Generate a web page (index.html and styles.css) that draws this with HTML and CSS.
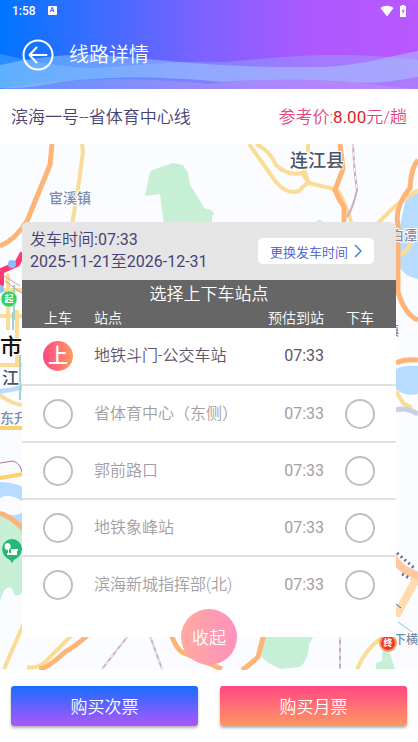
FILE: index.html
```html
<!DOCTYPE html>
<html lang="zh-CN">
<head>
    <meta charset="UTF-8">
    <meta name="viewport" content="width=device-width, initial-scale=1.0">
    <title>线路详情</title>
    <link rel="stylesheet" href="styles.css">
</head>
<body>

<header class="header">
    <svg class="waves" viewBox="0 0 418 89" preserveAspectRatio="none" aria-hidden="true">
        <path d="M0 54 C30 61 60 67 95 68 C130 66 170 61 225 62 C270 58 300 55 335 55 C370 55 395 57 418 60 V89 H0Z" fill="#8ecbff" fill-opacity=".3"/>
        <path d="M0 65 C45 55 80 53 115 56 C180 62 230 68 320 67 C360 66 390 56 418 51 V77 C390 82 370 84 350 82 C300 78 250 80 225 82 C160 76 110 76 60 82 C40 86 20 89 0 88Z" fill="#a8e0ff" fill-opacity=".42"/>
        <path d="M0 89 C80 75 150 78 210 84 C270 77 330 80 370 84 C390 86 405 88 418 89Z" fill="#d9a6ff" fill-opacity=".28"/>
    </svg>
    <div class="status-bar">
        <span>1:58</span>
        <span class="input-badge">A</span>
        <span class="status-icons">
            <svg width="14" height="12" viewBox="0 0 14 12" aria-hidden="true"><path d="M0.5 3 C4 0 10 0 13.500 3 L7 11.500Z" fill="#fff"/></svg>
            <svg width="6" height="12" viewBox="0 0 6 12" aria-hidden="true"><path d="M0 1 H1.500 V0 H4.500 V1 H6 V12 H0Z" fill="#fff"/><path d="M4 2.500 L1.500 6.500 H3 L2.300 10 L4.600 5.500 H3Z" fill="#b058f4"/></svg>
        </span>
    </div>
    <div class="title-bar">
        <button class="back" type="button" aria-label="返回">
            <svg width="32" height="32" viewBox="0 0 32 32" fill="none" stroke="#fff" stroke-width="2" aria-hidden="true">
                <circle cx="16" cy="16" r="14.500"/>
                <path d="M24.500 16 H8 M14.500 8.500 L7.500 16 L14.500 23.500" stroke-linecap="round"/>
            </svg>
        </button>
        <h1>线路详情</h1>
    </div>
</header>

<main class="main">
    <div class="route">
        <h2>滨海一号--省体育中心线</h2>
        <span class="price">参考价:<b>8.00</b>元/趟</span>
    </div>

    <div class="map-section">
        <svg class="map" viewBox="0 144 418 526" preserveAspectRatio="xMidYMid slice" aria-hidden="true">
            <rect y="144" width="418" height="526" fill="#fafcff"/>
            <!-- parks -->
            <g fill="#c6efd5">
                <path d="M145 196 L150 172 Q153 169 158 168 L173 163 L183 165 L188 173 L190 185 L199 199 L204 208 L212 211 V225 H164 L160 194Z"/>
                <path d="M208 209 Q213 209 214 215 L208 216Z M316 222 Q320 218 323 222Z"/>
                <path d="M0 514 Q16 520 23 531 V592 Q17 598 14 594 Q12 585 7 588 Q3 590 0 601Z"/>
                <path d="M264 634 H315 L309 644 Q309 659 300 667 L281 669 Q266 663 261 656Z"/>
                <path d="M383 640 L390 654 L395 669 H376 V663 L382 661Z"/>
            </g>
            <!-- water -->
            <g fill="#b7dcff">
                <path d="M418 193 Q405 196 404 207 L400 226 L397 262 Q402 276 418 279Z"/>
                <path d="M396 369 Q405 365 418 366 V394 Q405 397 396 389Z"/>
                <path d="M0 389 L14 387 L22 383 V390 L0 394Z M0 482 Q12 482 23 487 V502 Q10 492 0 498Z M8 514 Q16 517 23 512 V528Z"/>
            </g>
            <!-- minor roads -->
            <g fill="none" stroke="#fbdc97" stroke-width="4">
                <path d="M82 144 L83 152 L79 182 L72 225"/>
                <path d="M249 144 L276 182 Q287 195 299 191 Q305 184 309 183 L338 190"/>
                <path d="M256 144 Q270 151 276 165 Q287 176 302 173 L309 183 L303 168 M308 144 V152"/>
                <path d="M338 190 Q347 207 352 225 M375 226 L394 207 L418 190"/>
                <path d="M396 256 Q411 252 410 241 M396 391 L403 403 L412 408"/>
                <path d="M23 625 L4 669 M73 634 L50 657 Q39 670 27 667 M383 637 Q366 648 357 669"/>
                <path d="M0 290 H23 M0 316 H23 M0 365 H23 M8 274 V330 M17 310 V365 M0 395 Q12 404 22 405"/>
            </g>
            <!-- main roads -->
            <g fill="none" stroke="#ffb477" stroke-width="5">
                <path d="M52 144 L50 165 L27 221 Q15 240 0 246"/>
                <path d="M340 144 L343 169 L335 190 Q339 200 344 207 V225"/>
                <path d="M418 160 Q411 168 410 188 Q394 207 398 225 V292 Q405 315 418 320 M396 363 Q404 359 418 360"/>
                <path d="M0 513 Q12 517 23 529"/>
                <path d="M89 634 Q76 646 65 652 Q48 668 39 669 M171 634 Q177 651 184 653 L222 669 M264 634 L258 657 Q247 667 242 670"/>
                <path d="M418 576 L396 616" stroke="#ffdcae" stroke-width="8"/>
                <path d="M392 556 Q402 572 420 576" stroke="#ffc8a0" stroke-width="8"/>
                <path d="M0 428 H23 M0 478 L23 474" stroke="#ffd06d" stroke-width="4"/>
            </g>
            <!-- railways and metro -->
            <g fill="none" stroke="#c8b0b2" stroke-width="2">
                <path d="M353 144 Q354 170 357 190 Q353 208 347 217 M128 636 L102 669 M150 636 L162 669 M340 636 V669"/>
            </g>
            <g fill="none" stroke="#fff" stroke-width="1" stroke-dasharray="4 4">
                <path d="M353 144 Q354 170 357 190 M128 636 L102 669 M150 636 L162 669 M340 636 V669"/>
            </g>
            <path d="M397 553 L414 568 M402 574 L411 579" fill="none" stroke="#6b7080" stroke-width="3" stroke-dasharray="2 3"/>
            <path d="M0 463 L13 461 Q20 463 22 472" fill="none" stroke="#a4779a"/>
            <path d="M13 312 V330 M20 355 V400 M14 285 V320" fill="none" stroke="#a5d0cc" stroke-width="2"/>
            <path d="M396 410 Q406 407 418 414" fill="none" stroke="#c7d0e7" stroke-width="5"/>
            <path d="M396 604 L401 608" stroke="#336bc0" stroke-width="1"/>
            <path d="M398 622 L418 636" stroke="#80cbd0" stroke-width="1"/>
            <!-- bus line -->
            <path d="M23 253 L17 264 L1 271 V286" fill="none" stroke="#ff3974" stroke-width="6"/>
            <path d="M5 281 L23 294 M4 276 L20 286" stroke="#c9a4a4"/>
            <circle cx="12" cy="264" r="4" fill="#8ebcff"/>
            <circle cx="0" cy="289" r="4" fill="#8ebcff"/>
            <!-- place names -->
            <g class="place">
                <text x="49" y="203" font-size="14">宦溪镇</text>
                <text x="0" y="423" font-size="14">东升</text>
                <text x="391" y="240" font-size="13">白潭</text>
                <text x="386" y="335" font-size="13">镇</text>
                <text x="394" y="644" font-size="12">下横</text>
            </g>
            <g class="place county">
                <text x="290" y="167" font-size="18">连江县</text>
                <text x="2" y="384" font-size="17">江</text>
            </g>
            <text class="place city" x="0" y="354" font-size="22">市</text>
            <!-- pins -->
            <circle cx="9" cy="299" r="8" fill="#35cf60" stroke="#a5efb7"/>
            <text class="pin" x="9" y="302" font-size="9">起</text>
            <circle cx="388" cy="643" r="8" fill="#e83a2d" stroke="#ff9b62" stroke-width="2"/>
            <text class="pin" x="388" y="646" font-size="9">终</text>
            <path d="M2 549 A10 10 0 1 1 22 549 Q21 557 14 560 L12 563 L10 560 Q3 557 2 549Z" fill="#27b779"/>
            <path d="M8 543 a3.500 3.500 0 0 1 1 6.500 V553 H11 V549 H18 V551 H17 V555 H7 V553 H8 V550 A3.500 3.500 0 0 1 8 543Z" fill="#fff"/>
        </svg>

        <section class="panel">
            <div class="departure">
                <p>发车时间<b>:07:33</b><br><b>2025-11-21</b>至<b>2026-12-31</b></p>
                <button class="change-time" type="button">更换发车时间
                    <svg width="8" height="14" viewBox="0 0 8 14" fill="none" stroke="#4488dd" stroke-width="1.500" aria-hidden="true"><path d="M1 1 L7 7 L1 13"/></svg>
                </button>
            </div>
            <table class="stations">
                <caption>选择上下车站点</caption>
                <thead>
                    <tr><th class="pick">上车</th><th class="name">站点</th><th class="eta">预估到站</th><th class="pick">下车</th></tr>
                </thead>
                <tbody>
                    <tr class="selected">
                        <td class="pick"><label class="boarding"><input type="radio" name="on" aria-label="地铁斗门-公交车站 上车" checked><span>上</span></label></td>
                        <td class="name">地铁斗门-公交车站</td>
                        <td class="time">07:33</td>
                        <td class="pick"></td>
                    </tr>
                    <tr>
                        <td class="pick"><input type="radio" name="on" aria-label="省体育中心（东侧） 上车"></td>
                        <td class="name">省体育中心（东侧）</td>
                        <td class="time">07:33</td>
                        <td class="pick"><input type="radio" name="off" aria-label="省体育中心（东侧） 下车"></td>
                    </tr>
                    <tr>
                        <td class="pick"><input type="radio" name="on" aria-label="郭前路口 上车"></td>
                        <td class="name">郭前路口</td>
                        <td class="time">07:33</td>
                        <td class="pick"><input type="radio" name="off" aria-label="郭前路口 下车"></td>
                    </tr>
                    <tr>
                        <td class="pick"><input type="radio" name="on" aria-label="地铁象峰站 上车"></td>
                        <td class="name">地铁象峰站</td>
                        <td class="time">07:33</td>
                        <td class="pick"><input type="radio" name="off" aria-label="地铁象峰站 下车"></td>
                    </tr>
                    <tr>
                        <td class="pick"><input type="radio" name="on" aria-label="滨海新城指挥部(北) 上车"></td>
                        <td class="name">滨海新城指挥部(北)</td>
                        <td class="time">07:33</td>
                        <td class="pick"><input type="radio" name="off" aria-label="滨海新城指挥部(北) 下车"></td>
                    </tr>
                </tbody>
            </table>
            <button class="collapse" type="button">收起</button>
        </section>
    </div>
</main>

<footer class="footer">
    <button class="buy single" type="button">购买次票</button>
    <button class="buy monthly" type="button">购买月票</button>
</footer>

</body>
</html>
```
FILE: styles.css
```css
* {
    box-sizing: border-box;
}
body {
    margin: 0;
    min-height: 100vh;
    display: flex;
    flex-direction: column;
    background-color: #fff;
    color: #454375;
    font-family: Roboto, "Noto Sans CJK SC", sans-serif;
    font-size: 16px;
    font-weight: 350;
}
h1, h2, p {
    margin: 0;
    font-weight: 350;
}
b {
    font-weight: 400;
}
button {
    border: none;
    font-family: inherit;
    font-weight: 350;
    cursor: pointer;
}
.header {
    position: relative;
    height: 89px;
    color: #fff;
    background: linear-gradient(90deg, #0075ff 0%, #7c62ff 48%, #ae58ff 75%, #b958ff 100%);
}
.waves {
    position: absolute;
    inset: 0;
    width: 100%;
    height: 100%;
}
.status-bar, .title-bar {
    position: relative;
    display: flex;
    align-items: center;
}
.status-bar {
    height: 21px;
    padding: 0 12px;
    gap: 12px;
    font-size: 12px;
    font-weight: 500;
}
.input-badge {
    width: 9px;
    height: 9px;
    border-radius: 1px;
    background-color: #fff;
    color: #3c6cff;
    font-size: 7px;
    font-weight: 700;
    line-height: 9px;
    text-align: center;
}
.status-icons {
    display: flex;
    gap: 6px;
    margin-left: auto;
}
.title-bar {
    height: 68px;
    padding: 0 22px;
    gap: 15px;
}
.title-bar h1 {
    font-size: 20px;
    line-height: 28px;
}
.back {
    display: flex;
    padding: 0;
    background: none;
}
.main {
    flex: 1;
    display: flex;
    flex-direction: column;
}
.route {
    display: flex;
    align-items: center;
    justify-content: space-between;
    height: 55px;
    padding: 0 11px 2px;
}
.route h2, .price {
    font-size: 17px;
}
.price {
    color: #e34585;
}
.price b {
    color: #dc1e28;
}
.map-section {
    position: relative;
    flex: 1;
    padding: 78px 22px 33px;
}
.map {
    position: absolute;
    inset: 0;
    width: 100%;
    height: 100%;
}
.place {
    fill: #7b8bae;
    font-weight: 500;
    stroke: #fff;
    stroke-width: 2px;
    paint-order: stroke;
}
.county {
    fill: #495568;
}
.city {
    fill: #111;
}
.pin {
    fill: #fff;
    font-weight: 700;
    text-anchor: middle;
}
.panel {
    position: relative;
    padding-bottom: 24px;
    border-radius: 6px 6px 0 0;
    background-color: #fff;
}
.departure {
    display: flex;
    align-items: center;
    justify-content: space-between;
    height: 58px;
    padding: 0 22px 0 8px;
    border-radius: 6px 6px 0 0;
    background-color: #e5e5e5;
    line-height: 22px;
}
.change-time {
    display: flex;
    align-items: center;
    gap: 6px;
    height: 26px;
    padding: 0 12px;
    border-radius: 5px;
    background-color: #fff;
    color: #4859ce;
    font-size: 13px;
}
.stations {
    width: 100%;
    border-collapse: collapse;
    table-layout: fixed;
    color: #a39da4;
}
.stations caption {
    height: 28px;
    background-color: #666;
    color: #fff;
    font-size: 17px;
    line-height: 28px;
}
.stations th {
    height: 20px;
    padding: 0;
    background-color: #666;
    color: #fff;
    font-size: 14px;
    font-weight: 350;
    line-height: 20px;
}
.stations td {
    height: 57px;
    padding: 0;
    line-height: 24px;
}
.stations tbody tr + tr {
    border-top: 2px solid #e1e1e1;
}
.stations .pick {
    width: 72px;
    text-align: center;
}
.stations .name {
    text-align: left;
}
.stations .eta, .stations .time {
    width: 64px;
    text-align: right;
}
.stations .time {
    font-weight: 400;
}
.stations .selected {
    color: #5e5568;
}
.stations input {
    appearance: none;
    display: block;
    width: 30px;
    height: 30px;
    margin: 0 auto;
    border: 2px solid #bfbfbf;
    border-radius: 50%;
    background-color: #fff;
}
.boarding {
    display: grid;
    place-items: center;
}
.boarding input, .boarding span {
    grid-area: 1 / 1;
}
.boarding input:checked {
    border: none;
    background: linear-gradient(90deg, #ff4684, #ff9b62);
}
.boarding span {
    z-index: 1;
    color: #fff;
    font-size: 20px;
    font-weight: 500;
}
.collapse {
    position: absolute;
    left: 50%;
    bottom: -28px;
    width: 56px;
    height: 56px;
    padding: 0 0 2px;
    border-radius: 50%;
    transform: translateX(-50%);
    background: linear-gradient(90deg, #ffaaa0, #ff90bd);
    color: #fff;
    font-size: 17px;
}
.footer {
    display: flex;
    gap: 22px;
    padding: 16px 11px;
}
.buy {
    flex: 1;
    height: 40px;
    padding: 0 0 2px;
    border-radius: 3px;
    box-shadow: 0 2px 3px rgba(0, 0, 0, 0.3);
    color: #fff;
    font-size: 17px;
}
.single {
    background: linear-gradient(#196cff, #ac58fa);
}
.monthly {
    background: linear-gradient(#ff4881, #ff9764);
}
```
